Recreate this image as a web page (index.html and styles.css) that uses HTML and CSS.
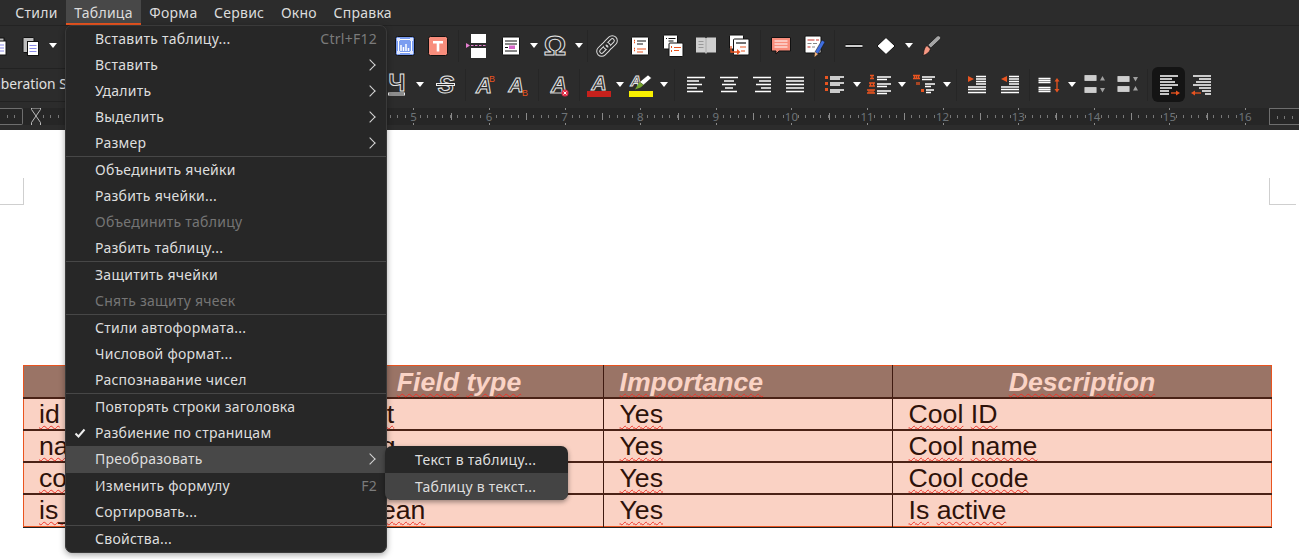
FILE: index.html
```html
<!DOCTYPE html>
<html lang="ru">
<head>
<meta charset="utf-8">
<title>Writer</title>
<link rel="stylesheet" href="styles.css">
</head>
<body>
<div class="app">
  <nav class="menubar">
    <span class="mb">Стили</span><span class="mb mb-open">Таблица</span><span class="mb">Форма</span><span class="mb">Сервис</span><span class="mb">Окно</span><span class="mb">Справка</span>
  </nav>

  <div class="toolbar tb1">
    <span class="btn btn-clip"><svg class="ic" viewBox="0 0 24 24"><rect x="8" y="4" width="11" height="15" fill="#bbb" stroke="#111"/><rect x="11" y="7" width="10" height="14" fill="#fff" stroke="#111"/><path d="M13 11h6M13 14h6M13 17h6" stroke="#8a8ae8"/></svg></span>
    <span class="btn"><svg class="ic" viewBox="0 0 24 24"><rect x="5" y="3.500" width="11" height="15" rx="1" fill="#bdbdbd" stroke="#111"/><rect x="9.500" y="7.500" width="11" height="14" fill="#fff" stroke="#111"/><path d="M11.500 11.500h7M11.500 14.500h7M11.500 17.500h7" stroke="#8a8ae8"/></svg></span>
    <span class="dd"></span>
    <span class="hidden-run run1"></span>
    <span class="btn"><svg class="ic" viewBox="0 0 24 24"><rect x="2.500" y="2.500" width="19" height="19" rx="2" fill="#7b9df0" stroke="#111"/><path d="M5.500 5.500h13v13h-13z" fill="none" stroke="#fff"/><path d="M8 17v-6M10.500 17v-4M13 17v-7M15.500 17v-3" stroke="#fff" stroke-width="1.500"/><path d="M4 4h3v3h-3zM17 4h3v3h-3zM4 17h3v3h-3zM17 17h3v3h-3z" fill="#dfe7ff"/></svg></span>
    <span class="btn"><svg class="ic" viewBox="0 0 24 24"><rect x="2.500" y="2.500" width="19" height="19" rx="2" fill="#f88d7c" stroke="#111"/><path d="M7 7h10v2.500h-3.700v8h-2.600v-8h-3.700z" fill="#fff"/></svg></span>
    <span class="sep s7"></span>
    <span class="btn"><svg class="ic" viewBox="0 0 24 24"><rect x="5" y="0" width="15" height="9" fill="#fff"/><rect x="5" y="14" width="15" height="10" fill="#fff"/><path d="M5 11.500h15" stroke="#e67fd0" stroke-dasharray="2.500 1.500" stroke-width="1.200"/><path d="M0 9l4 2.500-4 2.500z" fill="#e67fd0"/></svg></span>
    <span class="btn"><svg class="ic" viewBox="0 0 24 24"><rect x="3.500" y="3" width="17" height="18" rx="1" fill="#fff" stroke="#111"/><path d="M6 7h12M6 10h12M6 17h12M6 13.500h3" stroke="#111" stroke-width="1.200"/><rect x="10" y="11.500" width="6" height="3.500" fill="#d667c8"/></svg></span>
    <span class="dd"></span>
    <span class="btn"><svg class="ic" viewBox="0 0 24 24"><text class="gl" x="11" y="20.500" font-size="28" text-anchor="middle">Ω</text></svg></span>
    <span class="dd"></span>
    <span class="sep s6"></span>
    <span class="btn"><svg class="ic" viewBox="0 0 24 24"><g fill="none" transform="rotate(-45 12 12)"><g stroke="#ddd" stroke-width="4"><rect x="1" y="8.500" width="13" height="7" rx="3.500"/><rect x="10" y="8.500" width="13" height="7" rx="3.500"/></g><g stroke="#2c2c2c" stroke-width="2"><rect x="1" y="8.500" width="13" height="7" rx="3.500"/><rect x="10" y="8.500" width="13" height="7" rx="3.500"/></g></g></svg></span>
    <span class="btn"><svg class="ic" viewBox="0 0 24 24"><rect x="3.500" y="3" width="17" height="18" rx="1" fill="#fff" stroke="#111"/><path d="M6 6.500h1M6 8.500h1M6 14.500h1M6 16.500h1" stroke="#e95420" stroke-width="1.500"/><path d="M9 7h9M9 10h6" stroke="#111" stroke-width="1.200"/><path d="M9 15h9M9 18h6" stroke="#e95420" stroke-width="1.200"/></svg></span>
    <span class="btn"><svg class="ic" viewBox="0 0 24 24"><rect x="2.500" y="1" width="14" height="14" rx="1" fill="#fff" stroke="#111"/><path d="M5 4.500h1M7.500 4.500h7M7.500 7h5" stroke="#111" stroke-width="1.200"/><rect x="8" y="9" width="14" height="13.500" rx="1" fill="#fff" stroke="#111"/><path d="M10 13h1M10 17h1" stroke="#e95420" stroke-width="2"/><path d="M13 13.500h7M13 16.500h5" stroke="#e95420" stroke-width="1.200"/></svg></span>
    <span class="btn"><svg class="ic" viewBox="0 0 24 24"><path d="M2 3.500h9l1 1 1-1h9v15h-9l-1 1.500-1-1.500h-9z" fill="#cfcfcf"/><path d="M12 5v14" stroke="#aaa"/><path d="M4.500 7.500h5M4.500 10.500h5M4.500 13.500h5" stroke="#999"/></svg></span>
    <span class="btn"><svg class="ic" viewBox="0 0 24 24"><rect x="2.500" y="1" width="14" height="14" rx="1" fill="#fff" stroke="#111"/><rect x="6.500" y="5" width="15.500" height="16" rx="1" fill="#fff" stroke="#111"/><path d="M9 9h10" stroke="#111" stroke-width="1.200"/><path d="M13 13h6M14 17h4" stroke="#e95420" stroke-width="1.200"/><path d="M4 12v6h6" fill="none" stroke="#e95420" stroke-width="1.300"/><path d="M10 15l3.500 3-3.500 3z" fill="#e95420"/></svg></span>
    <span class="sep s9"></span>
    <span class="btn"><svg class="ic" viewBox="0 0 24 24"><path d="M2.500 3.500h19v13.500h-11.500l-3 3v-3h-4.500z" fill="#f88d7c" stroke="#111" stroke-linejoin="round"/><path d="M5.500 7h13M5.500 10h13M5.500 13h13" stroke="#fff" stroke-width="1.200"/></svg></span>
    <span class="btn"><svg class="ic" viewBox="0 0 24 24"><rect x="3" y="2" width="16" height="17" rx="1" fill="#fff" stroke="#111"/><path d="M5.500 6h7M14 6h3M5.500 13h3" stroke="#c9332a" stroke-width="1.200"/><path d="M5.500 9.500h4M11 9.500h4M10 13h3" stroke="#888" stroke-width="1.200"/><path d="M20 6l3 2-7 12-3-2z" fill="#3f6ee0" stroke="#111" stroke-width=".5"/><path d="M13 18l3 2-3.500 3z" fill="#f3b27a"/></svg></span>
    <span class="sep s8"></span>
    <span class="btn btn-31"><svg class="ic" viewBox="0 0 24 24"><path d="M3.500 12h17" stroke="#111" stroke-width="4"/><path d="M3.500 12h17" stroke="#fff" stroke-width="1.600"/></svg></span>
    <span class="btn"><svg class="ic" viewBox="0 0 24 24"><path d="M12 3.500l9 8.500-9 8.500-9-8.500z" fill="#fff" stroke="#111"/></svg></span>
    <span class="dd"></span>
    <span class="btn"><svg class="ic" viewBox="0 0 24 24"><path d="M21 2.500c1 1 .8 2-.2 3l-9 8.500-3-3 9-8.500c1-1 2.200-1 3.200 0z" fill="#a5a5a5" stroke="#111" stroke-width=".7"/><path d="M8 11.500l3.500 3.500c-1 3-3.500 5.500-7.500 6.500 1-3 .5-7.500 4-10z" fill="#f79883" stroke="#111" stroke-width=".7"/></svg></span>
  </div>

  <div class="toolbar tb2">
    <div class="fontbox"><span class="fontname">Liberation Sans</span></div>
    <span class="hidden-run run2"></span>
    <span class="btn"><svg class="ic" viewBox="0 0 24 24"><text class="gl" x="12" y="18" font-size="24" text-anchor="middle">Ч</text><rect x="3.500" y="20" width="16" height="2" fill="#2c2c2c" stroke="#eee"/></svg></span>
    <span class="dd"></span>
    <span class="sep s4 sep-none"></span>
    <span class="btn"><svg class="ic" viewBox="0 0 24 24"><text class="gl gl-i" x="12" y="20" font-size="24" text-anchor="middle">S</text><rect x="2.500" y="10.500" width="18" height="2" fill="#2c2c2c" stroke="#eee"/></svg></span>
    <span class="sep s6"></span>
    <span class="btn"><svg class="ic" viewBox="0 0 24 24"><text class="gl gl-i" x="11" y="20" font-size="22" text-anchor="middle">A</text><text class="up" x="19" y="9" font-size="9" text-anchor="middle">B</text></svg></span>
    <span class="btn"><svg class="ic" viewBox="0 0 24 24"><text class="gl gl-i" x="10" y="19" font-size="21" text-anchor="middle">A</text><text class="up" x="19" y="23" font-size="9" text-anchor="middle">B</text></svg></span>
    <span class="sep s8"></span>
    <span class="btn"><svg class="ic" viewBox="0 0 24 24"><text class="gl gl-i" x="12" y="19" font-size="22" text-anchor="middle">A</text><path d="M3 20h14" stroke="#ddd"/><circle cx="18" cy="20" r="3.500" fill="#e0304a"/><path d="M16.500 18.500l3 3M19.500 18.500l-3 3" stroke="#fff"/></svg></span>
    <span class="sep s7"></span>
    <span class="btn"><svg class="ic" viewBox="0 0 24 24"><text class="gl gl-i" x="12" y="17" font-size="21" text-anchor="middle">A</text><rect x="0" y="18" width="24" height="6" fill="#c7211c"/></svg></span>
    <span class="dd dd-9"></span>
    <span class="btn"><svg class="ic" viewBox="0 0 24 24"><text class="gl gl-i" x="7" y="13" font-size="15" text-anchor="middle">A</text><path d="M19 2l3.500 3-8 7-4-3z" fill="#fff" stroke="#111" stroke-width=".5"/><path d="M10.500 9l4 3-3 2.500-5.500 2z" fill="#77a82e"/><rect x="0" y="18" width="24" height="6" fill="#f8f000"/></svg></span>
    <span class="dd"></span>
    <span class="sep s10"></span>
    <span class="btn"><svg class="ic ln" viewBox="0 0 24 24"><path d="M3 4.500h18M3 8h12M3 11.500h15M3 15h10M3 18.500h16"/></svg></span>
    <span class="btn"><svg class="ic ln" viewBox="0 0 24 24"><path d="M3 4.500h18M7 8h10M5 11.500h14M8 15h8M4 18.500h16"/></svg></span>
    <span class="btn"><svg class="ic ln" viewBox="0 0 24 24"><path d="M3 4.500h18M9 8h12M6 11.500h15M11 15h10M5 18.500h16"/></svg></span>
    <span class="btn"><svg class="ic ln" viewBox="0 0 24 24"><path d="M3 4.500h18M3 8h18M3 11.500h18M3 15h18M3 18.500h18"/></svg></span>
    <span class="sep s6"></span>
    <span class="btn"><svg class="ic ln" viewBox="0 0 24 24"><path class="or-f" d="M3 3h3v3h-3zM3 9h3v3h-3zM3 15h3v3h-3z"/><path d="M8 4h14M8 6h10M8 10h14M8 12h10M8 17h14M8 19h10"/></svg></span>
    <span class="dd"></span>
    <span class="btn"><svg class="ic ln" viewBox="0 0 24 24"><path class="or-s" d="M3 2.500h4M5 2.500v3M3 5.500h4M2 10h6M3.500 10v3M6.500 10v3M2 13h6M0 17h8M2 17v3M4 17v3M6 17v3M0 20h8"/><path d="M10 4h14M10 6.500h10M10 11h14M10 13.500h10M10 18h14M10 20.500h10"/></svg></span>
    <span class="dd"></span>
    <span class="btn"><svg class="ic ln" viewBox="0 0 24 24"><path class="or-s" d="M1 2.500h7M2.500 2.500v3M4.500 2.500v3M6.500 2.500v3M1 5.500h7M5 9v3M7 9v3"/><path class="or-f" d="M9 16h3v3h-3z"/><path d="M10 4h13M10 6.500h10M13 11h10M13 13.500h6M14 17h8M14 19.500h5"/></svg></span>
    <span class="dd"></span>
    <span class="sep s8"></span>
    <span class="btn"><svg class="ic ln" viewBox="0 0 24 24"><path class="or-f" d="M3 3v6l6-3z"/><path d="M11 3.500h10M11 6h10M11 8.500h10M11 11h10M3 14h18M3 16.500h18M3 19.500h18"/></svg></span>
    <span class="btn"><svg class="ic ln" viewBox="0 0 24 24"><path class="or-f" d="M9 3v6l-6-3z"/><path d="M11 3.500h10M11 6h10M11 8.500h10M11 11h10M3 14h18M3 16.500h18M3 19.500h18"/></svg></span>
    <span class="sep s6"></span>
    <span class="btn"><svg class="ic ln" viewBox="0 0 24 24"><path d="M1.500 5.500h12M1.500 7.500h12M1.500 9.500h12M1.500 14.500h12M1.500 16.500h12M1.500 18.500h12"/><path class="or-s" d="M20 7v10"/><path class="or-f" d="M20 5l2.500 3.500h-5zM20 19.500l2.500-3.500h-5z"/></svg></span>
    <span class="dd"></span>
    <span class="btn"><svg class="ic" viewBox="0 0 24 24"><path d="M2.500 2h12v6h-12zM2.500 14h12v6h-12z" fill="#c4c4c4"/><path d="M2.500 4h12M2.500 6h12M2.500 16h12M2.500 18h12" stroke="#e8e8e8" stroke-width=".6"/><path d="M20.500 3l2.500 4.500h-5zM20.500 19.500l-2.500-4.500h5z" fill="#a0a0a0"/></svg></span>
    <span class="btn"><svg class="ic" viewBox="0 0 24 24"><path d="M2.500 3h12v6h-12zM2.500 13h12v6h-12z" fill="#c4c4c4"/><path d="M2.500 5h12M2.500 7h12M2.500 15h12M2.500 17h12" stroke="#e8e8e8" stroke-width=".6"/><path d="M20.500 8.500l-2.500-4.500h5zM20.500 13l2.500 4.500h-5z" fill="#a0a0a0"/></svg></span>
    <span class="sep s85"></span>
    <span class="btn btn-on"><svg class="ic ln" viewBox="0 0 24 24"><path d="M3 3h18M3 6h12M3 9h15M3 12h18M3 15h12M3 18h9M3 21h9"/><path class="or-s" d="M14 20h6"/><path class="or-f" d="M19 17.500l4 2.500-4 2.500z"/></svg></span>
    <span class="btn"><svg class="ic ln" viewBox="0 0 24 24"><path d="M3 3h18M9 6h12M6 9h15M3 12h18M9 15h12M12 18h9M15 21h6"/><path class="or-s" d="M4 20h7"/><path class="or-f" d="M5 17.500l-4 2.500 4 2.500z"/></svg></span>
  </div>

  <div class="rulerwrap">
    <div class="ruler">
      <span class="margin-l"></span>
      <span class="zero"></span>
      <span class="cell"><b>1</b></span><span class="cell"><b>2</b></span><span class="cell"><b>3</b></span><span class="cell"><b>4</b></span><span class="cell"><b>5</b></span><span class="cell"><b>6</b></span><span class="cell"><b>7</b></span><span class="cell"><b>8</b></span><span class="cell"><b>9</b></span><span class="cell"><b>10</b></span><span class="cell"><b>11</b></span><span class="cell"><b>12</b></span><span class="cell"><b>13</b></span><span class="cell"><b>14</b></span><span class="cell"><b>15</b></span><span class="cell"><b>16</b></span>
      <span class="margin-r"></span>
      <svg viewBox="0 0 12 20" class="hourg"><path d="M1.500 1h9v1.500l-4.500 6.500 4.500 6.500v3h-9v-3l4.500-6.500-4.500-6.500z" fill="#2c2c2c" stroke="#bbb"/></svg>
    </div>
  </div>

  <main class="page">
    <div class="crops"><span class="crop-l"></span><span class="crop-r"></span></div>
    <table class="dt">
      <colgroup><col class="c1"><col class="c2"><col class="c3"><col class="c4"></colgroup>
      <thead>
        <tr><th><span class="w">Field</span> <span class="w">name</span></th><th><span class="w">Field</span> <span class="w">type</span></th><th class="th-l"><span class="w">Importance</span></th><th><span class="w">Description</span></th></tr>
      </thead>
      <tbody>
        <tr><td><span class="w">id</span></td><td><span class="w">bigint</span></td><td><span class="w">Yes</span></td><td><span class="w">Cool</span> <span class="w">ID</span></td></tr>
        <tr><td><span class="w">name</span></td><td><span class="w">string</span></td><td><span class="w">Yes</span></td><td><span class="w">Cool</span> <span class="w">name</span></td></tr>
        <tr><td><span class="w">code</span></td><td><span class="w">string</span></td><td><span class="w">Yes</span></td><td><span class="w">Cool</span> <span class="w">code</span></td></tr>
        <tr><td><span class="w">is_active</span></td><td><span class="w">boolean</span></td><td><span class="w">Yes</span></td><td><span class="w">Is</span> <span class="w">active</span></td></tr>
      </tbody>
    </table>
  </main>

  <div class="menu">
    <div class="mi">Вставить таблицу...<span class="key">Ctrl+F12</span></div>
    <div class="mi">Вставить<span class="arr"></span></div>
    <div class="mi">Удалить<span class="arr"></span></div>
    <div class="mi">Выделить<span class="arr"></span></div>
    <div class="mi">Размер<span class="arr"></span></div>
    <div class="ms"></div>
    <div class="mi">Объединить ячейки</div>
    <div class="mi">Разбить ячейки...</div>
    <div class="mi mi-off">Объединить таблицу</div>
    <div class="mi">Разбить таблицу...</div>
    <div class="ms"></div>
    <div class="mi">Защитить ячейки</div>
    <div class="mi mi-off">Снять защиту ячеек</div>
    <div class="ms"></div>
    <div class="mi">Стили автоформата...</div>
    <div class="mi">Числовой формат...</div>
    <div class="mi">Распознавание чисел</div>
    <div class="ms"></div>
    <div class="mi">Повторять строки заголовка</div>
    <div class="mi"><svg class="chk" viewBox="0 0 12 12"><path d="M1.500 6.500l3 3 6-7" fill="none" stroke="#eee" stroke-width="2"/></svg>Разбиение по страницам</div>
    <div class="mi mi-hot">Преобразовать<span class="arr"></span>
      <div class="submenu">
        <div class="si">Текст в таблицу...</div>
        <div class="si si-hot">Таблицу в текст...</div>
      </div>
    </div>
    <div class="mi">Изменить формулу<span class="key">F2</span></div>
    <div class="mi">Сортировать...</div>
    <div class="ms"></div>
    <div class="mi">Свойства...</div>
  </div>
</div>
</body>
</html>
```
FILE: styles.css
```css
* { box-sizing: border-box; }
html, body { margin: 0; padding: 0; height: 100%; background: #fff; overflow: hidden; }
.app { position: relative; width: 1299px; height: 559px; overflow: hidden; font-family: "Noto Sans", sans-serif; letter-spacing: .26px; }

.menubar { display: flex; height: 26px; background: #2c2c2c; border-bottom: 1px solid #232323; padding-left: 7px; }
.mb { padding: 0 8.300px; line-height: 25px; font-size: 14px; color: #dcdcdc; height: 25px; }
.mb-open { background: #484848; border-bottom: 2px solid #e95420; }

.toolbar { display: flex; align-items: center; background: #2c2c2c; overflow: hidden; letter-spacing: 0; }
.tb1 { height: 40px; padding-bottom: 1px; }
.tb2 { height: 37px; }
.btn { flex: none; width: 33px; height: 35px; display: flex; align-items: center; justify-content: center; border-radius: 6px; }
.btn-clip { margin-left: -19.500px; }
.btn-31 { width: 31px; }
.btn-on { background: #141414; }
.ic { width: 24px; height: 24px; display: block; overflow: visible; }
.ln path { stroke: #fff; stroke-width: 1.300; fill: none; }
.ln path.or-s { stroke: #e95420; stroke-width: 1.300; }
.ln path.or-f { stroke: none; fill: #e95420; }
.gl { font-family: "Liberation Sans", sans-serif; font-weight: 700; fill: #2c2c2c; stroke: #e6e6e6; stroke-width: 1; }
.gl-i { font-style: italic; }
.up { font-family: "Liberation Sans", sans-serif; fill: #e95420; font-weight: 400; }
.dd { flex: none; width: 12px; height: 10px; display: flex; align-items: center; justify-content: center; }
.dd::after { content: ""; width: 0; height: 0; border-left: 4px solid transparent; border-right: 4px solid transparent; border-top: 5px solid #fff; }
.dd-9 { width: 9px; }
.sep { flex: none; height: 32px; display: flex; justify-content: center; }
.sep::after { content: ""; width: 1px; background: #262626; }
.sep-none::after { display: none; }
.s4 { width: 4px; } .s6 { width: 6px; } .s7 { width: 7px; } .s8 { width: 8px; } .s85 { width: 8.500px; } .s9 { width: 9px; } .s10 { width: 10px; }
.hidden-run { flex: none; }
.run1 { width: 330px; }
.run2 { width: 315.500px; }
.fontbox { flex: none; width: 65px; height: 34px; border-top: 1px solid #222; border-bottom: 1px solid #222; overflow: hidden; white-space: nowrap; display: flex; align-items: center; padding-bottom: 2px; }
.fontname { margin-left: -10px; font-size: 13.800px; color: #e0e0e0; letter-spacing: 0; }

.rulerwrap { height: 27px; background: #2c2c2c; padding-top: 5px; }
.ruler { position: relative; height: 17px; background: #262626; display: flex; overflow: hidden; letter-spacing: 0; }
.margin-l { flex: none; width: 23px; height: 17px; border: 1px solid #6e6e6e; border-left: 0; border-radius: 0 2px 2px 0; background: repeating-linear-gradient(90deg, transparent 0 6.560px, #777 6.560px 7.560px) 0 6px / 100% 3px no-repeat; }
.zero { flex: none; width: 12.500px; }
.hourg { position: absolute; left: 30px; top: -1px; width: 12px; height: 20px; }
.cell { flex: none; width: 75.600px; height: 17px; position: relative; display: flex; align-items: center; justify-content: center;
  background:
    linear-gradient(#8a8a8a, #8a8a8a) 37.300px 5px / 1px 7px no-repeat,
    repeating-linear-gradient(90deg, transparent 0 6.560px, #777 6.560px 7.560px) 0 7px / 100% 3px no-repeat; }
.cell b { position: relative; left: 37.800px; font-weight: 400; font-size: 11.500px; line-height: 17px; color: #6e7478; background: #262626; padding: 0 1px; }
.cell b::before, .cell b::after { content: ""; position: absolute; left: 50%; width: 1px; height: 2px; background: #8a8a8a; }
.cell b::before { top: 0; }
.cell b::after { bottom: 0; }
.margin-r { position: absolute; right: -3px; top: 0; width: 33px; height: 17px; border: 1px solid #6e6e6e; background: repeating-linear-gradient(90deg, transparent 0 6.560px, #777 6.560px 7.560px) 0 7px / 100% 3px no-repeat, #262626; }

.page { background: #fff; padding-top: 48px; }
.crops { display: flex; justify-content: space-between; height: 27px; padding-right: 3px; }
.crop-l { width: 24px; border-right: 1px solid #cfcfcf; border-bottom: 1px solid #cfcfcf; }
.crop-r { width: 27px; border-left: 1px solid #cfcfcf; border-bottom: 1px solid #cfcfcf; }

.dt { border-collapse: collapse; table-layout: fixed; width: 1248px; margin: 160px 0 0 23px; font-family: "Liberation Sans", sans-serif; font-size: 26.670px; color: #2e120a; border: 1px solid #e95420; box-shadow: 0 1px 0 #222; letter-spacing: 0; }
.c1 { width: 291px; } .c2 { width: 289px; } .c3 { width: 289px; } .c4 { width: 379px; }
.dt th, .dt td { padding: 0 15.500px; border-left: 1px solid #3f1a10; border-right: 1px solid #3f1a10; white-space: nowrap; line-height: 30px; }
.dt th:first-child, .dt td:first-child { border-left: 0; padding-left: 15px; }
.dt th:last-child, .dt td:last-child { border-right: 0; }
.dt th { height: 32px; padding-top: 1px; background: #9a7466; color: #fad3c5; font-weight: 700; font-style: italic; text-align: center; vertical-align: top; }
.dt th.th-l { text-align: left; }
.dt td { height: 32px; background: #fad2c4; border-top: 2px solid #4a2216; }
.w { text-decoration: underline wavy #ee3328 1px; text-underline-offset: 2px; }

.menu { position: absolute; left: 65px; top: 25px; width: 322px; height: 528px; background: #272727; border: 1px solid #3a3a3a; border-radius: 7px; box-shadow: 0 2px 6px rgba(0,0,0,.35); font-size: 14px; color: #dedede; }
.mi { position: relative; height: 26px; line-height: 26px; padding-left: 29px; white-space: nowrap; }
.mi-off { color: #757575; }
.mi-hot { background: #484848; height: 27px; }
.ms { height: 1px; background: #474747; }
.key { position: absolute; right: 9px; top: 0; color: #7b7b7b; }
.arr { position: absolute; right: 12px; top: 9px; width: 8px; height: 8px; border-top: 1.300px solid #d6d6d6; border-right: 1.300px solid #d6d6d6; transform: rotate(45deg); }
.chk { position: absolute; left: 8px; top: 7px; width: 12px; height: 12px; }
.submenu { position: absolute; left: 319px; top: 0; width: 183px; height: 54px; background: #272727; border-radius: 7px; box-shadow: 0 2px 5px rgba(0,0,0,.4); overflow: hidden; z-index: 2; }
.si { height: 27px; line-height: 27px; padding-left: 30px; }
.si-hot { background: #444; }
```
